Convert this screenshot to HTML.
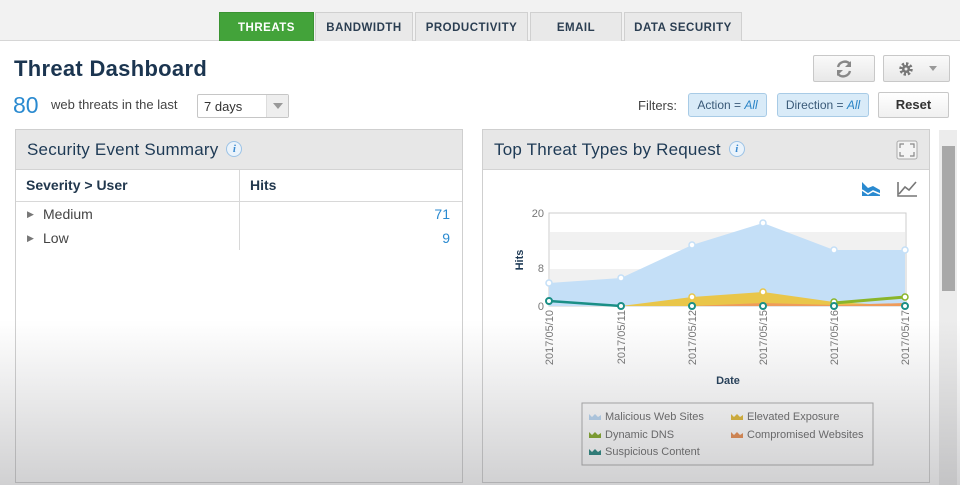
<!DOCTYPE html>
<html><head><meta charset="utf-8"><style>
*{box-sizing:border-box;margin:0;padding:0}
body{width:960px;height:485px;overflow:hidden;background:#fff;font-family:"Liberation Sans",sans-serif;position:relative;color:#333}
.abs{position:absolute}
.topbar{left:0;top:0;width:960px;height:41px;background:#f2f2f2;border-bottom:1px solid #d6d6d6}
.tab{position:absolute;top:12px;height:29px;background:#e9e9e9;border:1px solid #d0d0d0;border-bottom:none;font-size:11.5px;font-weight:bold;color:#2b3e52;text-align:center;line-height:30px;letter-spacing:.5px}
.tab.on{background:#43a33a;color:#fff;border-color:#3a9332}
h1{position:absolute;left:14px;top:56px;font-size:22px;font-weight:bold;color:#1b3550;letter-spacing:.3px}
.btn{position:absolute;background:linear-gradient(#fafafa,#e8e8e8);border:1px solid #c8c8c8;border-radius:2px}
.chip{position:absolute;top:93px;height:24px;background:#d9ebf8;border:1px solid #a8cbe6;border-radius:3px;font-size:12px;color:#3a5a78;line-height:22px;text-align:center}
.chip i{color:#2a84c6}
.panel{position:absolute;top:129px;border:1px solid #cfcfcf;background:#fff}
.ph{height:40px;background:#e7e7e7;border-bottom:1px solid #d3d3d3;font-size:17px;color:#1e3a55;padding:10px 0 0 11px;letter-spacing:.2px}
.info{display:inline-block;width:16px;height:16px;border-radius:50%;border:1px solid #9cc3e6;background:#eaf3fb;color:#3b8ad0;font-size:11px;font-style:italic;font-weight:bold;text-align:center;line-height:14px;vertical-align:3px;margin-left:8px;font-family:"Liberation Serif",serif}
.shade{left:0;top:0;width:960px;height:485px;pointer-events:none;background:linear-gradient(rgba(0,0,0,0) 0,rgba(0,0,0,0) 320px,rgba(120,120,125,.1) 370px,rgba(110,110,115,.32) 485px)}
</style></head><body>
<div class="abs topbar"></div>
<div class="tab on" style="left:219px;width:95px">THREATS</div>
<div class="tab" style="left:315px;width:98px">BANDWIDTH</div>
<div class="tab" style="left:415px;width:113px">PRODUCTIVITY</div>
<div class="tab" style="left:530px;width:92px">EMAIL</div>
<div class="tab" style="left:624px;width:118px">DATA SECURITY</div>
<h1>Threat Dashboard</h1>
<div class="abs" style="left:13px;top:92px;font-size:23px;color:#2a8ad0">80</div>
<div class="abs" style="left:51px;top:97px;font-size:13px;color:#444">web threats in the last</div>
<div class="abs" style="left:197px;top:94px;width:92px;height:24px;border:1px solid #c6c6c6;border-radius:2px;background:#fff;font-size:13px;padding:4px 0 0 6px;color:#333">7 days
<div class="abs" style="right:0;top:0;width:22px;height:22px;background:#eee;border-left:1px solid #ddd"><div style="margin:8px 0 0 6px;width:0;height:0;border-left:5px solid transparent;border-right:5px solid transparent;border-top:6px solid #999"></div></div></div>
<div class="btn" style="left:813px;top:55px;width:62px;height:27px"><svg width="60" height="25" viewBox="0 0 60 25"><g fill="none" stroke="#888" stroke-width="2.4"><path d="M24 11a7 7 0 0 1 12-3"/><path d="M36 15a7 7 0 0 1-12 3"/></g><path d="M37 5v6h-6z" fill="#888"/><path d="M23 20v-6h6z" fill="#888"/></svg></div>
<div class="btn" style="left:883px;top:55px;width:67px;height:27px"><svg width="65" height="25" viewBox="0 0 65 25"><circle cx="22" cy="13" r="5" fill="none" stroke="#777" stroke-width="3.5" stroke-dasharray="2.2 1.7"/><circle cx="22" cy="13" r="4" fill="#777"/><circle cx="22" cy="13" r="1.5" fill="#eee"/><path d="M45 10h8l-4 5z" fill="#999"/></svg></div>
<div class="abs" style="left:638px;top:98px;font-size:13px;color:#444">Filters:</div>
<div class="chip" style="left:688px;width:79px">Action = <i>All</i></div>
<div class="chip" style="left:777px;width:92px">Direction = <i>All</i></div>
<div class="btn" style="left:878px;top:92px;width:71px;height:26px;font-size:13px;font-weight:bold;color:#333;text-align:center;line-height:24px;background:linear-gradient(#fff,#f0f0f0)">Reset</div>

<div class="panel" style="left:15px;width:448px;height:354px">
<div class="ph">Security Event Summary<span class="info">i</span></div>
<div style="height:32px;border-bottom:1px solid #d8d8d8;font-size:14px;font-weight:bold;color:#22384e;position:relative">
<span class="abs" style="left:10px;top:7px">Severity &gt; User</span>
<span class="abs" style="left:234px;top:7px">Hits</span>
<div class="abs" style="left:223px;top:0;width:1px;height:80px;background:#d8d8d8"></div></div>
<div style="position:relative;height:50px;font-size:14px;color:#444">
<span class="abs" style="left:11px;top:7px;font-size:9px;color:#777">▶</span><span class="abs" style="left:27px;top:4px">Medium</span><span class="abs" style="right:12px;top:4px;color:#2a8ad0">71</span>
<span class="abs" style="left:11px;top:31px;font-size:9px;color:#777">▶</span><span class="abs" style="left:27px;top:28px">Low</span><span class="abs" style="right:12px;top:28px;color:#2a8ad0">9</span>
</div></div>

<div class="panel" style="left:482px;width:448px;height:354px">
<div class="ph">Top Threat Types by Request<span class="info">i</span>
<svg class="abs" style="right:11px;top:10px" width="22" height="20" viewBox="0 0 22 20"><rect x="1" y="1" width="20" height="18" fill="#f4f4f4" stroke="#aaa" rx="2"/><path d="M4 8V4h4M14 4h4v4M18 12v4h-4M8 16H4v-4" stroke="#888" fill="none" stroke-width="1.2"/></svg></div>
</div>
<svg class="abs" style="left:482px;top:170px" width="448" height="315" viewBox="482 170 448 315">
<path d="M862 196v-14l6 6 5-2 7 4v6z" fill="#2a8ad0"/><path d="M862 190l6 4 5-3 7 3" stroke="#fff" fill="none" stroke-width="1.5"/>
<path d="M898 182v14h19M899 194l6-7 4 3 7-8" stroke="#777" fill="none" stroke-width="1.6"/>
<rect x="549" y="213" width="357" height="93" fill="#fff" stroke="#ccc"/>
<rect x="550" y="232" width="355" height="18" fill="#f1f1f1"/><rect x="550" y="269" width="355" height="18" fill="#f1f1f1"/>
<path d="M549 283L621 278L692 245L763 223L834 250L905 250V306H549Z" fill="#c4dff7"/>
<path d="M549 306L621 306L692 297L763 292L834 302L905 306V306H549Z" fill="#e9c64a"/>
<path d="M692 306L763 303L834 305L905 303V306Z" fill="#ef9b5a"/>
<path d="M834 303L905 297" stroke="#8ab52a" stroke-width="3"/>
<path d="M549 301L621 306" stroke="#1b8f86" stroke-width="2.5"/>
<g fill="#fff" stroke="#c4dff7" stroke-width="1.5"><circle cx="549" cy="283" r="3"/><circle cx="621" cy="278" r="3"/><circle cx="692" cy="245" r="3"/><circle cx="763" cy="223" r="3"/><circle cx="834" cy="250" r="3"/><circle cx="905" cy="250" r="3"/></g>
<g fill="#fff" stroke="#e9c64a" stroke-width="1.5"><circle cx="692" cy="297" r="3"/><circle cx="763" cy="292" r="3"/></g>
<g fill="#fff" stroke="#8ab52a" stroke-width="1.5"><circle cx="834" cy="302" r="3"/><circle cx="905" cy="297" r="3"/></g>
<g fill="#fff" stroke="#1b8f86" stroke-width="2"><circle cx="549" cy="301" r="3"/><circle cx="621" cy="306" r="3"/><circle cx="692" cy="306" r="3"/><circle cx="763" cy="306" r="3"/><circle cx="834" cy="306" r="3"/><circle cx="905" cy="306" r="3"/></g>
<g font-family="Liberation Sans" font-size="11" fill="#777" text-anchor="end"><text x="544" y="217">20</text><text x="544" y="272">8</text><text x="544" y="310">0</text></g>
<text transform="translate(523 260) rotate(-90)" font-family="Liberation Sans" font-size="11" font-weight="bold" fill="#1e3a55" text-anchor="middle">Hits</text>
<g font-family="Liberation Sans" font-size="11" fill="#777" text-anchor="end">
<text transform="translate(553 310) rotate(-90)">2017/05/10</text><text transform="translate(625 310) rotate(-90)">2017/05/11</text><text transform="translate(696 310) rotate(-90)">2017/05/12</text><text transform="translate(767 310) rotate(-90)">2017/05/15</text><text transform="translate(838 310) rotate(-90)">2017/05/16</text><text transform="translate(909 310) rotate(-90)">2017/05/17</text></g>
<text x="728" y="384" font-family="Liberation Sans" font-size="11" font-weight="bold" fill="#1e3a55" text-anchor="middle">Date</text>
<rect x="582" y="403" width="291" height="62" fill="none" stroke="#aaa"/>
<g font-family="Liberation Sans" font-size="11" fill="#666">
<path d="M589 420v-6l3 3 3-3 3 3 3-2v5z" fill="#b8d6f2"/><text x="605" y="420">Malicious Web Sites</text>
<path d="M731 420v-6l3 3 3-3 3 3 3-2v5z" fill="#e0b830"/><text x="747" y="420">Elevated Exposure</text>
<path d="M589 438v-6l3 3 3-3 3 3 3-2v5z" fill="#7ea51e"/><text x="605" y="438">Dynamic DNS</text>
<path d="M731 438v-6l3 3 3-3 3 3 3-2v5z" fill="#e88a4a"/><text x="747" y="438">Compromised Websites</text>
<path d="M589 455v-6l3 3 3-3 3 3 3-2v5z" fill="#1b7f78"/><text x="605" y="455">Suspicious Content</text></g>
</svg>
<div class="abs" style="left:939px;top:130px;width:18px;height:355px;background:#ececec"></div>
<div class="abs" style="left:942px;top:146px;width:13px;height:145px;background:#a8a8a8"></div>
<div class="abs shade"></div>
</body></html>
